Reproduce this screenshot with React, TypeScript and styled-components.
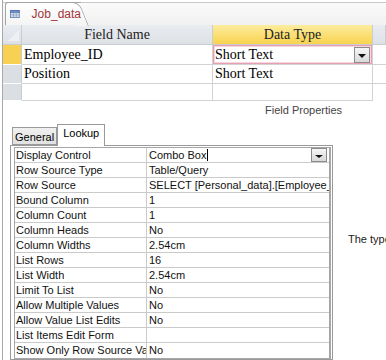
import styled, { createGlobalStyle } from "styled-components";

// ==================== 전역 =================

const GlobalStyle = createGlobalStyle`
  html, body {
    margin: 0;
    padding: 0;
    background: #fff;
  }
  * {
    box-sizing: border-box;
  }
`;

const SANS = `"Liberation Sans", Arial, sans-serif`;
const SERIF = `"Liberation Serif", "Times New Roman", serif`;

const App = () => {
  return (
    <>
      <GlobalStyle />
      <Page>
        <DocTabStrip>
          <DocTab>
            <TableIcon />
            <DocTabLabel>Job_data</DocTabLabel>
          </DocTab>
        </DocTabStrip>

        <FieldGrid />

        <SectionTitle>Field Properties</SectionTitle>

        <PropTabs>
          <PropTab>General</PropTab>
          <PropTab active>Lookup</PropTab>
        </PropTabs>

        <PropArea>
          <PropFrame>
            <PropTable>
              {lookupProps.map((p) => (
                <PropRow key={p.label}>
                  <PropLabel>{p.label}</PropLabel>
                  <PropValue>
                    {p.value}
                    {p.combo && (
                      <>
                        <Caret />
                        <ComboButton small>
                          <Arrow small />
                        </ComboButton>
                      </>
                    )}
                  </PropValue>
                </PropRow>
              ))}
            </PropTable>
          </PropFrame>
          <HelpText>The type of control to display this field on forms</HelpText>
        </PropArea>
      </Page>
    </>
  );
};

export default App;

const Page = styled.div`
  width: 384px;
  height: 360px;
  margin-left: 2px;
  border-left: 1px solid #a9a9a9;
  overflow: hidden;
  display: flex;
  flex-direction: column;
  background: #fff;
`;

// ==================== 문서 탭 =================

const DocTabStrip = styled.div`
  height: 23px;
  margin-top: 2px;
  padding-left: 2px;
  display: flex;
  align-items: flex-end;
  border-top: 1px solid #c9c9c9;
  background: linear-gradient(#fafafa, #f1f1f1);
`;

const DocTab = styled.div`
  position: relative;
  height: 23px;
  margin-top: -1px;
  width: 76px;
  display: flex;
  align-items: center;
  padding-left: 4px;
  gap: 12px;
  border-left: 1px solid #a4a4a4;
  border-top: 1px solid #a4a4a4;
  border-top-left-radius: 3px;
  background: linear-gradient(#ffffff, #f4f4f4);

  // 오른쪽 비스듬한 모서리
  &::after {
    content: "";
    position: absolute;
    top: -1px;
    right: -8px;
    width: 14px;
    height: 23px;
    border-top: 1px solid #a4a4a4;
    border-right: 1px solid #a4a4a4;
    border-top-right-radius: 7px;
    background: linear-gradient(#ffffff, #f4f4f4);
    transform: skewX(22deg);
    transform-origin: bottom left;
  }
`;

const DocTabLabel = styled.span`
  position: relative;
  z-index: 1;
  font-family: ${SANS};
  font-size: 12px;
  color: #a3373b;
`;

const TableIcon = () => (
  <svg width="12" height="10" viewBox="0 0 12 10" style={{ position: "relative", zIndex: 1 }}>
    <rect x="0.5" y="0.5" width="11" height="9" fill="#fff" stroke="#5273a8" />
    <rect x="0.5" y="0.5" width="11" height="2.5" fill="#6d8fc7" stroke="#5273a8" />
    <path d="M4.2 3v6.5M7.8 3v6.5M0.5 5.2h11M0.5 7.4h11" stroke="#7e98c4" strokeWidth="1" />
  </svg>
);

// ==================== 필드 그리드 =================

const FieldGrid = () => {
  return (
    <div>
      <GridHeader>
        <CornerCell>
          <CornerMark />
        </CornerCell>
        <HeadCell>Field Name</HeadCell>
        <HeadCell active>Data Type</HeadCell>
        <HeadCell />
      </GridHeader>
      {fieldRows.map((row, i) => (
        <GridRow key={i} h={row.h}>
          <Selector current={row.current} />
          <BodyCell>{row.name}</BodyCell>
          <BodyCell focused={row.current}>
            {row.type}
            {row.current && (
              <ComboButton>
                <Arrow />
              </ComboButton>
            )}
          </BodyCell>
          <FillerCell last={i === fieldRows.length - 1} />
        </GridRow>
      ))}
    </div>
  );
};

const COLS = "19px 191px 160px 1fr";

const GridHeader = styled.div`
  display: grid;
  grid-template-columns: ${COLS};
  height: 20px;
  background: linear-gradient(#e9ecf0, #dde1e6);
  border-bottom: 1px solid #c8cdd3;
`;

const CornerCell = styled.div`
  position: relative;
  border-right: 1px solid #c8cdd3;
`;

const CornerMark = styled.div`
  position: absolute;
  right: 2px;
  bottom: 3px;
  width: 0;
  height: 0;
  border-left: 11px solid transparent;
  border-bottom: 11px solid #eef0f3;
`;

const HeadCell = styled.div<{ active?: boolean }>`
  display: flex;
  align-items: center;
  justify-content: center;
  font-family: ${SERIF};
  font-size: 14px;
  color: #222;
  border-right: 1px solid #c8cdd3;
  background: ${(p) => (p.active ? "linear-gradient(#fdec9f, #f8d34e)" : "transparent")};
`;

const GridRow = styled.div<{ h: number }>`
  display: grid;
  grid-template-columns: ${COLS};
  height: ${(p) => p.h}px;
`;

const Selector = styled.div<{ current?: boolean }>`
  background: ${(p) => (p.current ? "#f8d154" : "#dbdfe4")};
  border-bottom: 1px solid #fff;
  border-right: 1px solid #c8cdd3;
`;

const BodyCell = styled.div<{ focused?: boolean }>`
  position: relative;
  display: flex;
  align-items: center;
  padding-left: 2px;
  font-family: ${SERIF};
  font-size: 14px;
  color: #000;
  white-space: nowrap;
  border-right: 1px solid #d2d2d2;
  border-bottom: 1px solid #d2d2d2;
  box-shadow: ${(p) => (p.focused ? "inset 0 0 0 1px #e6a0b1, inset 0 0 0 2px #f6d6de" : "none")};
`;

const FillerCell = styled.div<{ last?: boolean }>`
  border-bottom: ${(p) => (p.last ? "none" : "1px solid #d2d2d2")};
`;

const ComboButton = styled.div<{ small?: boolean }>`
  position: absolute;
  right: 2px;
  top: ${(p) => (p.small ? "0px" : "2px")};
  width: 16px;
  height: ${(p) => (p.small ? "14px" : "16px")};
  display: flex;
  align-items: center;
  justify-content: center;
  border: 1px solid #8c8c8c;
  background: linear-gradient(#f6f6f6, #d9d9d9);
`;

const Arrow = styled.div<{ small?: boolean }>`
  width: 0;
  height: 0;
  border-left: ${(p) => (p.small ? 4 : 4)}px solid transparent;
  border-right: ${(p) => (p.small ? 4 : 4)}px solid transparent;
  border-top: ${(p) => (p.small ? 3 : 4)}px solid #111;
  margin-top: ${(p) => (p.small ? 3 : 1)}px;
`;

// ==================== 필드 속성 =================

const SectionTitle = styled.div`
  height: 24px;
  padding-left: 262px;
  padding-top: 1px;
  font-family: ${SANS};
  font-size: 11px;
  line-height: 16px;
  color: #444;
`;

const PropTabs = styled.div`
  height: 21px;
  padding-left: 9px;
  display: flex;
  align-items: flex-end;
`;

const PropTab = styled.div<{ active?: boolean }>`
  height: ${(p) => (p.active ? 22 : 18)}px;
  margin-bottom: ${(p) => (p.active ? -1 : 0)}px;
  padding: ${(p) => (p.active ? "2px 5px 0" : "2px 2px 0")};
  position: relative;
  z-index: ${(p) => (p.active ? 1 : 0)};
  font-family: ${SANS};
  font-size: 11px;
  color: #000;
  border: 1px solid #9a9a9a;
  border-bottom: ${(p) => (p.active ? "none" : "1px solid #9a9a9a")};
  border-left: ${(p) => (p.active ? "1px solid #9a9a9a" : "1px solid #9a9a9a")};
  background: ${(p) => (p.active ? "#fff" : "linear-gradient(#f0f0f0, #e1e1e1)")};
  display: flex;
  align-items: ${(p) => (p.active ? "flex-start" : "center")};
`;

const PropArea = styled.div`
  flex: 1;
  display: flex;
  padding-left: 7px;
`;

const PropFrame = styled.div`
  width: 323px;
  height: 215px;
  padding: 1px 1px 2px 3px;
  border: 1px solid #9a9a9a;
  flex-shrink: 0;
`;

const PropTable = styled.div`
  border: 1px solid #a6a6a6;
  border-right-width: 2px;
  display: flex;
  flex-direction: column;
`;

const PropRow = styled.div`
  display: grid;
  grid-template-columns: 132px 1fr;
  height: 15px;
  border-bottom: 1px solid #cacaca;

  &:last-child {
    border-bottom: none;
  }
`;

const PropLabel = styled.div`
  padding-left: 1px;
  font-family: ${SANS};
  font-size: 11px;
  line-height: 14px;
  color: #111;
  white-space: nowrap;
  overflow: hidden;
  border-right: 1px solid #cacaca;
`;

const PropValue = styled.div`
  position: relative;
  padding-left: 2px;
  font-family: ${SANS};
  font-size: 11px;
  line-height: 14px;
  color: #111;
  white-space: nowrap;
  overflow: hidden;
`;

const Caret = styled.span`
  display: inline-block;
  width: 1px;
  height: 12px;
  margin-left: 1px;
  vertical-align: -2px;
  background: #000;
`;

const HelpText = styled.div`
  margin-top: 87px;
  margin-left: 15px;
  font-family: ${SANS};
  font-size: 11px;
  line-height: 14px;
  color: #222;
  white-space: nowrap;
`;

// ==================== 데이터 =================

const fieldRows = [
  { name: "Employee_ID", type: "Short Text", current: true, h: 20 },
  { name: "Position", type: "Short Text", current: false, h: 19 },
  { name: "", type: "", current: false, h: 17 },
];

const lookupProps: { label: string; value: string; combo?: boolean }[] = [
  { label: "Display Control", value: "Combo Box", combo: true },
  { label: "Row Source Type", value: "Table/Query" },
  { label: "Row Source", value: "SELECT [Personal_data].[Employee_ID] FROM [Personal_data];" },
  { label: "Bound Column", value: "1" },
  { label: "Column Count", value: "1" },
  { label: "Column Heads", value: "No" },
  { label: "Column Widths", value: "2.54cm" },
  { label: "List Rows", value: "16" },
  { label: "List Width", value: "2.54cm" },
  { label: "Limit To List", value: "No" },
  { label: "Allow Multiple Values", value: "No" },
  { label: "Allow Value List Edits", value: "No" },
  { label: "List Items Edit Form", value: "" },
  { label: "Show Only Row Source Values", value: "No" },
];
